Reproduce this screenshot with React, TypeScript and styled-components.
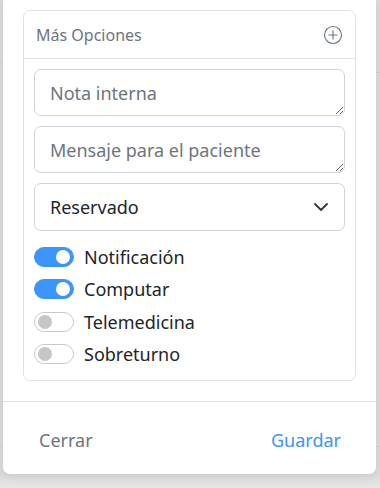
import styled, { createGlobalStyle } from "styled-components";

const GlobalStyle = createGlobalStyle`
  html, body {
    margin: 0;
    padding: 0;
    background: #dcdcdc;
    font-family: "Noto Sans", "Open Sans", sans-serif;
  }
  * { box-sizing: border-box; }
`;

const Backdrop = styled.div`
  position: relative;
  width: 380px;
  height: 488px;
  overflow: hidden;
  background: linear-gradient(#dadada, #dadada 474px, #e6e6e6 488px);
`;

const GridLine = styled.div<{ $top: number; $right?: boolean }>`
  position: absolute;
  top: ${(p) => p.$top}px;
  ${(p) => (p.$right ? "right: 0;" : "left: 0;")}
  width: 10px;
  height: 1px;
  background: #cfcfcf;
`;

const Modal = styled.div`
  position: relative;
  margin: 0 4px 0 3px;
  background: #fff;
  border-radius: 0 0 7px 7px;
  box-shadow: 0 2px 8px rgba(0, 0, 0, 0.08);
  display: flex;
  flex-direction: column;
`;

const Body = styled.div`
  padding: 10px 20px 20px 20px;
  border-bottom: 1px solid #dee2e6;
`;

const Card = styled.div`
  border: 1px solid #dee2e6;
  border-radius: 7px;
`;

const CardHeader = styled.div`
  height: 48px;
  padding: 0 12px;
  display: flex;
  align-items: center;
  justify-content: space-between;
  border-bottom: 1px solid #dee2e6;
  color: #6c757d;
  font-size: 16px;
`;

const CardBody = styled.div`
  padding: 10px 10px 13px 10px;
  display: flex;
  flex-direction: column;
  gap: 10px;
`;

const TextArea = styled.textarea`
  display: block;
  width: 100%;
  height: 47px;
  padding: 11px 15px;
  border: 1px solid #ced4da;
  border-radius: 7px;
  font-family: inherit;
  font-size: 18px;
  line-height: 24px;
  color: #212529;
  overflow: hidden;
  &::placeholder { color: #6c757d; }
`;

const SelectBox = styled.div`
  height: 48px;
  padding: 0 16px 0 15px;
  border: 1px solid #ced4da;
  border-radius: 7px;
  display: flex;
  align-items: center;
  justify-content: space-between;
  font-size: 18px;
  color: #212529;
`;

const Switches = styled.div`
  display: flex;
  flex-direction: column;
  gap: 7.5px;
  padding-top: 3px;
`;

const SwitchRow = styled.label`
  display: flex;
  align-items: center;
  gap: 10px;
  height: 25px;
  font-size: 18px;
  color: #212529;
`;

const Track = styled.span<{ $on: boolean }>`
  position: relative;
  width: 40px;
  height: 20px;
  border-radius: 10px;
  background: ${(p) => (p.$on ? "#3d95fb" : "#fff")};
  border: 1px solid ${(p) => (p.$on ? "#3d95fb" : "#c9c9c9")};
`;

const Knob = styled.span<{ $on: boolean }>`
  position: absolute;
  top: 50%;
  width: 14px;
  height: 14px;
  margin-top: -7px;
  border-radius: 50%;
  left: ${(p) => (p.$on ? "21px" : "3px")};
  background: ${(p) => (p.$on ? "#fff" : "#c6c6c6")};
`;

const Footer = styled.div`
  height: 72px;
  padding: 0 35px 0 36px;
  display: flex;
  align-items: center;
  justify-content: space-between;
  padding-top: 4px;
`;

const FooterButton = styled.button<{ $primary?: boolean }>`
  border: none;
  background: none;
  padding: 0;
  font-family: inherit;
  font-size: 18px;
  color: ${(p) => (p.$primary ? "#3d95fb" : "#6c757d")};
`;

const switches = [
  { label: "Notificación", on: true },
  { label: "Computar", on: true },
  { label: "Telemedicina", on: false },
  { label: "Sobreturno", on: false },
];

const App = () => {
  return (
    <Backdrop>
      <GlobalStyle />
      <GridLine $top={62} />
      <GridLine $top={72} $right />
      <GridLine $top={446} />
      <GridLine $top={446} $right />
      <Modal>
        <Body>
          <Card>
            <CardHeader>
              <span>Más Opciones</span>
              <svg width="20" height="20" viewBox="0 0 20 20" fill="none" stroke="#6c757d" strokeWidth="1.1">
                <circle cx="10" cy="10" r="8.5" />
                <path d="M10 5.5v9M5.5 10h9" />
              </svg>
            </CardHeader>
            <CardBody>
              <TextArea placeholder="Nota interna" />
              <TextArea placeholder="Mensaje para el paciente" />
              <SelectBox>
                <span>Reservado</span>
                <svg width="14" height="8" viewBox="0 0 14 8" fill="none" stroke="#343a40" strokeWidth="1.8" strokeLinecap="round" strokeLinejoin="round">
                  <path d="M1 1l6 6 6-6" />
                </svg>
              </SelectBox>
              <Switches>
                {switches.map((s) => (
                  <SwitchRow key={s.label}>
                    <Track $on={s.on}>
                      <Knob $on={s.on} />
                    </Track>
                    {s.label}
                  </SwitchRow>
                ))}
              </Switches>
            </CardBody>
          </Card>
        </Body>
        <Footer>
          <FooterButton>Cerrar</FooterButton>
          <FooterButton $primary>Guardar</FooterButton>
        </Footer>
      </Modal>
    </Backdrop>
  );
};

export default App;
